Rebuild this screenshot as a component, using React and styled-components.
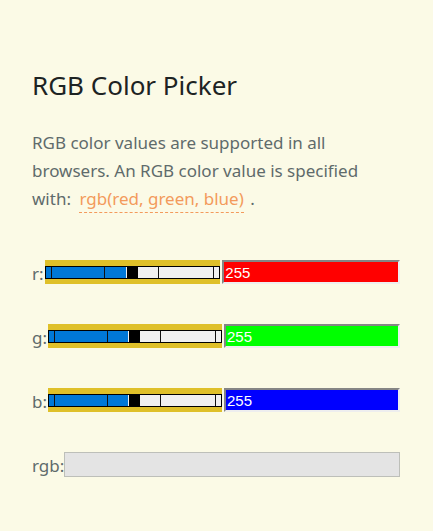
import React, { useState } from 'react';
import styled, { createGlobalStyle } from 'styled-components';

const GlobalStyle = createGlobalStyle`
  body {
    margin: 0;
    background: #fbfae6;
    color: #5f6b6b;
    font: 17px/28px "Noto Sans", "Open Sans", sans-serif;
  }
  *, *::before, *::after { box-sizing: border-box; }
`;

const Page = styled.main`
  padding: 64px 33px 48px 32px;
`;

const Title = styled.h1`
  margin: 0;
  color: #1d2323;
  font-size: 26px;
  line-height: 42px;
  font-weight: 400;
`;

const Intro = styled.p`
  margin: 23px 0 46px;
`;

const Code = styled.code`
  display: inline-block;
  margin: 0 2px 0 4px;
  color: #f39a5c;
  font-family: inherit;
  line-height: 26px;
  border-bottom: 1px dashed #f39a5c;
`;

const Form = styled.form`
  display: grid;
  gap: 40px;
  padding-top: 1px;
`;

const Row = styled.div`
  display: flex;
  align-items: center;
  height: 24px;
`;

const Label = styled.label`
  flex: none;
  padding-top: 3px;
  padding-right: ${({ $gap }) => $gap || 0}px;
`;

const Slider = styled.input`
  appearance: none;
  flex: 1 1 4px;
  min-width: 0;
  height: 24px;
  margin: 0 2px 0 0;
  background: #dfc029;

  &::-webkit-slider-runnable-track {
    height: 13px;
    border: 1px solid #000;
    background:
      linear-gradient(#111, #111) 3% 0 / 1px 100% no-repeat,
      linear-gradient(#111, #111) 34% 0 / 1px 100% no-repeat,
      linear-gradient(#111, #111) 65% 0 / 1px 100% no-repeat,
      linear-gradient(#111, #111) 97% 0 / 1px 100% no-repeat,
      linear-gradient(to right, #0078d7 var(--fill), #f0f0f0 var(--fill));
  }

  &::-webkit-slider-thumb {
    appearance: none;
    width: 13px;
    height: 11px;
    border: solid #f0f0f0;
    border-width: 0 1px;
    border-radius: 0;
    background: #000;
  }
`;

const Value = styled.input`
  flex: 1 1 0;
  min-width: 0;
  height: 24px;
  margin: 0;
  padding: 1px;
  border: 2px solid;
  border-color: #858585 #eeeeee #eeeeee #858585;
  border-radius: 0;
  background: ${({ $color }) => $color};
  color: #fff;
  font: 15px/18px "Liberation Sans", Arial, sans-serif;
`;

const Result = styled.input`
  flex: 1;
  min-width: 0;
  height: 25px;
  margin: 0;
  padding: 1px 2px;
  border: 1px solid #bdbfb9;
  border-radius: 0;
  background: #e4e4e4;
  font: 15px/18px "Liberation Sans", Arial, sans-serif;
`;

const channels = [
  { name: 'r', color: '#ff0000' },
  { name: 'g', color: '#00ff00' },
  { name: 'b', color: '#0000ff' },
];

function Channel({ name, color }) {
  const [level, setLevel] = useState(127);
  const [value, setValue] = useState('255');
  const change = (e) => {
    setLevel(Number(e.target.value));
    setValue(e.target.value);
  };
  return (
    <Row>
      <Label htmlFor={name} $gap={1}>{name}:</Label>
      <Slider
        id={name}
        type="range"
        min="0"
        max="255"
        value={level}
        onChange={change}
        style={{ '--fill': `${(level / 255) * 100}%` }}
      />
      <Value
        aria-label={`${name} value`}
        $color={color}
        value={value}
        onChange={(e) => setValue(e.target.value)}
      />
    </Row>
  );
}

export default function App() {
  return (
    <>
      <GlobalStyle />
      <Page>
        <Title>RGB Color Picker</Title>
        <Intro>
          RGB color values are supported in all browsers. An RGB color value is
          specified with: <Code>rgb(red, green, blue)</Code> .
        </Intro>
        <Form>
          {channels.map((c) => (
            <Channel key={c.name} {...c} />
          ))}
          <Row>
            <Label htmlFor="rgb">rgb:</Label>
            <Result id="rgb" type="text" disabled />
          </Row>
        </Form>
      </Page>
    </>
  );
}
